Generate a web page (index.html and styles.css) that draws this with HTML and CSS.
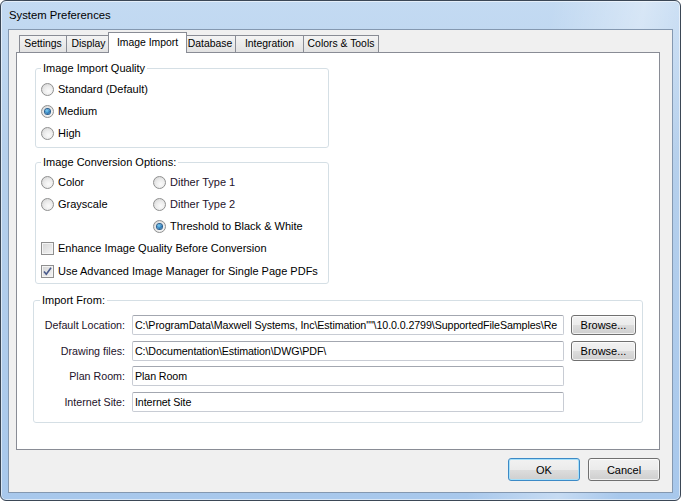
FILE: index.html
```html
<!DOCTYPE html>
<html lang="en">
<head>
    <meta charset="UTF-8">
    <title>System Preferences</title>
    <link rel="stylesheet" href="styles.css">
</head>
<body>

    <div class="window">

        <div class="titlebar">System Preferences</div>

        <div class="client">

            <!-- tab strip -->
            <div class="tabs">
                <div class="tab tab-settings">Settings</div>
                <div class="tab tab-display">Display</div>
                <div class="tab tab-import selected">Image Import</div>
                <div class="tab tab-database">Database</div>
                <div class="tab tab-integration">Integration</div>
                <div class="tab tab-colors">Colors &amp; Tools</div>
            </div>

            <div class="panel">

                <fieldset class="group group-quality">
                    <legend>Image Import Quality</legend>
                    <div class="option"><span class="radio"></span>Standard (Default)</div>
                    <div class="option"><span class="radio checked"></span>Medium</div>
                    <div class="option"><span class="radio"></span>High</div>
                </fieldset>

                <fieldset class="group group-conversion">
                    <legend>Image Conversion Options:</legend>
                    <div class="conversion-grid">
                        <div class="option"><span class="radio"></span>Color</div>
                        <div class="option tinted"><span class="radio"></span>Dither Type 1</div>
                        <div class="option"><span class="radio"></span>Grayscale</div>
                        <div class="option tinted"><span class="radio"></span>Dither Type 2</div>
                        <div></div>
                        <div class="option"><span class="radio checked"></span>Threshold to Black &amp; White</div>
                        <div class="option wide"><span class="check"></span>Enhance Image Quality Before Conversion</div>
                        <div class="option wide">
                            <span class="check">
                                <svg width="11" height="11" viewBox="0 0 11 11"><path d="M2 5.5 L4.3 8.3 L9 1.8" fill="none" stroke="#4a5b8c" stroke-width="1.6"/></svg>
                            </span>Use Advanced Image Manager for Single Page PDFs
                        </div>
                    </div>
                </fieldset>

                <fieldset class="group group-import">
                    <legend>Import From:</legend>
                    <div class="import-grid">
                        <label class="field-label">Default Location:</label>
                        <div class="textbox">C:\ProgramData\Maxwell Systems, Inc\Estimation""\10.0.0.2799\SupportedFileSamples\Re</div>
                        <button class="btn browse">Browse...</button>

                        <label class="field-label">Drawing files:</label>
                        <div class="textbox">C:\Documentation\Estimation\DWG\PDF\</div>
                        <button class="btn browse">Browse...</button>

                        <label class="field-label">Plan Room:</label>
                        <div class="textbox">Plan Room</div>
                        <div></div>

                        <label class="field-label">Internet Site:</label>
                        <div class="textbox">Internet Site</div>
                        <div></div>
                    </div>
                </fieldset>

            </div>

            <div class="actions">
                <button class="btn action default">OK</button>
                <button class="btn action">Cancel</button>
            </div>

        </div>

    </div>

</body>
</html>
```

FILE: styles.css
```css
body{
    margin: 0;
    background-color: #ffffff;
    font-family: "Liberation Sans", Arial, sans-serif;
    font-size: 11px;
    color: #000000;
}

.window{
    width: 681px;
    height: 501px;
    box-sizing: border-box;
    border: 1px solid #3b4756;
    border-radius: 6px;
    background: linear-gradient(100deg, rgba(255,255,255,0) 72%, rgba(255,255,255,0.35) 84%, rgba(255,255,255,0) 92%),
                linear-gradient(to bottom, #c3daf2, #b6d0ec 30%, #a8c8ec);
    box-shadow: inset 0 0 0 1px rgba(255,255,255,0.55);
    display: flex;
    flex-direction: column;
    overflow: hidden;
}

.titlebar{
    height: 28px;
    line-height: 28px;
    padding-left: 8px;
    font-size: 11.3px;
    color: #000000;
}

.client{
    flex: 1;
    margin: 0 7px 7px 7px;
    border: 1px solid #8498b0;
    background-color: #f0f0f0;
    padding: 2px 12px 11px 7px;
    display: flex;
    flex-direction: column;
}

/* tabs */

.tabs{
    display: flex;
    align-items: flex-end;
    height: 20px;
    padding-left: 3px;
    position: relative;
    z-index: 1;
}

.tab{
    height: 17px;
    line-height: 16px;
    box-sizing: border-box;
    border: 1px solid #898c95;
    border-bottom: none;
    background: linear-gradient(to bottom, #f4f4f4, #e2e2e2);
    text-align: center;
    font-size: 10.4px;
    margin-right: -1px;
}

.tab-settings{ width: 48px; }
.tab-display{ width: 45px; }
.tab-database{ width: 52px; }
.tab-integration{ width: 69px; }
.tab-colors{ width: 76px; }

.tab-import{ width: 75px; }

.tab.selected{
    height: 21px;
    line-height: 19px;
    width: 79px;
    margin: 0 -3px -1px -2px;
    background: #ffffff;
    position: relative;
    z-index: 2;
}

.panel{
    height: 398px;
    box-sizing: border-box;
    border: 1px solid #898c95;
    background-color: #ffffff;
    padding-top: 9px;
}

/* group boxes */

.group{
    margin: 0;
    border: 1px solid #d5dfe5;
    border-radius: 3px;
    box-sizing: border-box;
}

.group legend{
    padding: 0 2px;
    line-height: 13px;
}

.group-quality{
    margin-left: 18px;
    width: 294px;
    padding: 3px 5px 3px 5px;
}

.group-conversion{
    margin: 8px 0 0 18px;
    width: 294px;
    padding: 2px 5px 1px 5px;
}

.group-import{
    margin: 10px 0 0 16px;
    width: 610px;
    padding: 8px 6px 10px 6px;
}

.option{
    height: 22px;
    display: flex;
    align-items: center;
    white-space: nowrap;
}

.tinted{
    color: #24122a;
}

.conversion-grid{
    display: grid;
    grid-template-columns: 112px auto;
}

.conversion-grid .wide{
    grid-column: 1 / 3;
}

.conversion-grid .wide:last-child{
    margin-top: 1px;
}

/* radio buttons and check boxes */

.radio{
    width: 13px;
    height: 13px;
    box-sizing: border-box;
    border-radius: 50%;
    border: 1px solid #8f9090;
    background: radial-gradient(circle at 60% 65%, #fbfbfb 0, #ececec 45%, #cfcfcf 100%);
    margin-right: 4px;
    flex-shrink: 0;
    display: flex;
    align-items: center;
    justify-content: center;
}

.radio.checked::after{
    content: "";
    width: 5px;
    height: 5px;
    border-radius: 50%;
    background: radial-gradient(circle at 40% 35%, #7fd3f7 0, #2b79b8 60%, #174c7d 100%);
    box-shadow: 0 0 0 1px #2a5f8e;
}

.check{
    width: 13px;
    height: 13px;
    box-sizing: border-box;
    border: 1px solid #8f8f8f;
    background: linear-gradient(135deg, #d4d4d4, #f5f5f5);
    box-shadow: inset 0 0 0 1px #f4f4f4;
    margin-right: 4px;
    flex-shrink: 0;
    display: flex;
    align-items: center;
    justify-content: center;
}

/* import fields */

.import-grid{
    display: grid;
    grid-template-columns: 85px 432px 65px;
    column-gap: 7px;
    row-gap: 5.67px;
    align-items: center;
}

.field-label{
    text-align: right;
    white-space: nowrap;
    color: #24122a;
    font-size: 10.7px;
}

.textbox{
    height: 20px;
    line-height: 18px;
    box-sizing: border-box;
    border: 1px solid #c8ccd4;
    border-top-color: #a3a7b0;
    border-radius: 2px;
    padding-left: 2px;
    white-space: nowrap;
    overflow: hidden;
    background-color: #ffffff;
    font-size: 10.7px;
    letter-spacing: -0.1px;
}

.btn{
    font-family: "Liberation Sans", Arial, sans-serif;
    font-size: 11px;
    color: #000000;
    border: 1px solid #707070;
    border-radius: 3px;
    background: linear-gradient(to bottom, #f2f2f2 0%, #ebebeb 50%, #dddddd 51%, #cfcfcf 100%);
    box-shadow: inset 0 0 0 1px rgba(255,255,255,0.7);
    padding: 0;
}

.browse{
    height: 20px;
    width: 65px;
}

.actions{
    display: flex;
    justify-content: flex-end;
    gap: 8px;
    margin-top: 8px;
}

.action{
    width: 72px;
    height: 23px;
}

.default{
    border-color: #3c8ac6;
    box-shadow: inset 0 0 0 1px #a6e0fa;
}
```
